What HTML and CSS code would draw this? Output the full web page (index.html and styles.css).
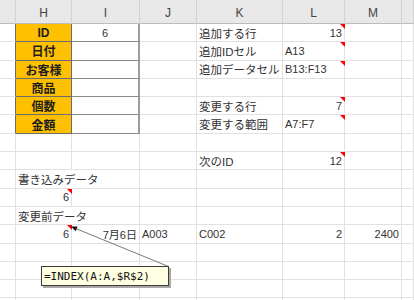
FILE: index.html
```html
<!DOCTYPE html>
<html lang="ja">
<head>
<meta charset="utf-8">
<title>Sheet</title>
<link rel="stylesheet" href="styles.css">
</head>
<body>
<div class="wrap">
  <div class="sheet">
    <!-- header -->
    <div class="hd"></div><div class="hd">H</div><div class="hd">I</div><div class="hd">J</div><div class="hd">K</div><div class="hd">L</div><div class="hd">M</div><div class="hd"></div>
    <!-- 1 -->
    <div class="c edge"></div><div class="c key">ID</div><div class="c box ctr lat">6</div><div class="c"></div><div class="c">追加する行</div><div class="c r lat flag">13</div><div class="c"></div><div class="c"></div>
    <!-- 2 -->
    <div class="c edge"></div><div class="c key">日付</div><div class="c box"></div><div class="c"></div><div class="c">追加IDセル</div><div class="c lat flag">A13</div><div class="c"></div><div class="c"></div>
    <!-- 3 -->
    <div class="c edge"></div><div class="c key">お客様</div><div class="c box"></div><div class="c"></div><div class="c">追加データセル</div><div class="c lat flag">B13:F13</div><div class="c"></div><div class="c"></div>
    <!-- 4 -->
    <div class="c edge"></div><div class="c key">商品</div><div class="c box"></div><div class="c"></div><div class="c"></div><div class="c"></div><div class="c"></div><div class="c"></div>
    <!-- 5 -->
    <div class="c edge"></div><div class="c key">個数</div><div class="c box"></div><div class="c"></div><div class="c">変更する行</div><div class="c r lat flag">7</div><div class="c"></div><div class="c"></div>
    <!-- 6 -->
    <div class="c edge"></div><div class="c key">金額</div><div class="c box"></div><div class="c"></div><div class="c">変更する範囲</div><div class="c lat flag">A7:F7</div><div class="c"></div><div class="c"></div>
    <!-- 7 -->
    <div class="c"></div><div class="c"></div><div class="c"></div><div class="c"></div><div class="c"></div><div class="c"></div><div class="c"></div><div class="c"></div>
    <!-- 8 -->
    <div class="c"></div><div class="c"></div><div class="c"></div><div class="c"></div><div class="c">次のID</div><div class="c r lat flag">12</div><div class="c"></div><div class="c"></div>
    <!-- 9 -->
    <div class="c"></div><div class="c spill">書き込みデータ</div><div class="c"></div><div class="c"></div><div class="c"></div><div class="c"></div><div class="c"></div><div class="c"></div>
    <!-- 10 -->
    <div class="c"></div><div class="c r lat flag">6</div><div class="c"></div><div class="c"></div><div class="c"></div><div class="c"></div><div class="c"></div><div class="c"></div>
    <!-- 11 -->
    <div class="c"></div><div class="c spill">変更前データ</div><div class="c"></div><div class="c"></div><div class="c"></div><div class="c"></div><div class="c"></div><div class="c"></div>
    <!-- 12 -->
    <div class="c"></div><div class="c r lat flag">6</div><div class="c r lat">7月6日</div><div class="c lat">A003</div><div class="c lat">C002</div><div class="c r lat">2</div><div class="c r lat">2400</div><div class="c"></div>
    <!-- 13 -->
    <div class="c"></div><div class="c"></div><div class="c"></div><div class="c"></div><div class="c"></div><div class="c"></div><div class="c"></div><div class="c"></div>
    <!-- 14 -->
    <div class="c"></div><div class="c"></div><div class="c"></div><div class="c"></div><div class="c"></div><div class="c"></div><div class="c"></div><div class="c"></div>
    <!-- 15 -->
    <div class="c"></div><div class="c"></div><div class="c"></div><div class="c"></div><div class="c"></div><div class="c"></div><div class="c"></div><div class="c"></div>
    <!-- 16 -->
    <div class="c"></div><div class="c"></div><div class="c"></div><div class="c"></div><div class="c"></div><div class="c"></div><div class="c"></div><div class="c"></div>
  </div>

  <svg class="connector" width="414" height="300" viewBox="0 0 414 300" aria-hidden="true">
    <line x1="168.5" y1="266.5" x2="74" y2="227.8" stroke="#7a7a7a" stroke-width="1"/>
    <polygon points="71,226.5 77.6,226.6 75.7,231.2" fill="#111"/>
  </svg>

  <div class="note">=INDEX(A:A,$R$2)</div>
</div>
</body>
</html>
```

FILE: styles.css
```css
html, body {
  margin: 0;
  padding: 0;
  background: #ffffff;
}

.wrap {
  position: relative;
  width: 414px;
  height: 300px;
  overflow: hidden;
}

.sheet {
  display: grid;
  grid-template-columns: 16px 56px 68px 57px 86px 62px 57px 1fr;
  grid-template-rows: 24px repeat(16, 18.3px);
  width: 414px;
}

.hd {
  box-sizing: border-box;
  background: #e8e8e8;
  border-right: 1px solid #d2d2d2;
  border-bottom: 1px solid #bcbcbc;
  display: flex;
  align-items: center;
  justify-content: center;
  padding-top: 3px;
  font: 12px "Liberation Sans", Arial, sans-serif;
  color: #444444;
}

.c {
  box-sizing: border-box;
  position: relative;
  min-width: 0;
  display: flex;
  align-items: center;
  padding: 0 2px;
  border-right: 1px solid #e1e1e1;
  border-bottom: 1px solid #e1e1e1;
  white-space: nowrap;
  font: 11.5px "Liberation Sans", "Noto Sans CJK JP", sans-serif;
  color: #333333;
}

.r { justify-content: flex-end; }
.ctr { justify-content: center; }
.lat { font-size: 11px; }

.edge {
  border-right-color: #6b6b6b;
}

.key {
  justify-content: center;
  background: #ffc000;
  border-right-color: #6b6b6b;
  border-bottom-color: #6b6b6b;
  font-size: 12px;
  font-weight: bold;
  color: #1e1e1e;
}

.box {
  border-right: 2px solid #9c9c9c;
  border-bottom-color: #8a8a8a;
}

.spill {
  overflow: visible;
  border-right-color: transparent;
}

.flag::after {
  content: "";
  position: absolute;
  top: 0;
  right: -1px;
  width: 0;
  height: 0;
  border-top: 5px solid #ff0000;
  border-left: 5px solid transparent;
}

.connector {
  position: absolute;
  left: 0;
  top: 0;
  pointer-events: none;
}

.note {
  position: absolute;
  left: 41px;
  top: 266px;
  width: 128px;
  height: 20px;
  box-sizing: border-box;
  padding: 0 2px;
  display: flex;
  align-items: center;
  background: #ffffe1;
  border: 1px solid #3c3c3c;
  box-shadow: 2px 2px 0 #a8a8a8;
  font: 11px "DejaVu Sans Mono", "Liberation Mono", monospace;
  color: #111111;
  white-space: nowrap;
}
```
